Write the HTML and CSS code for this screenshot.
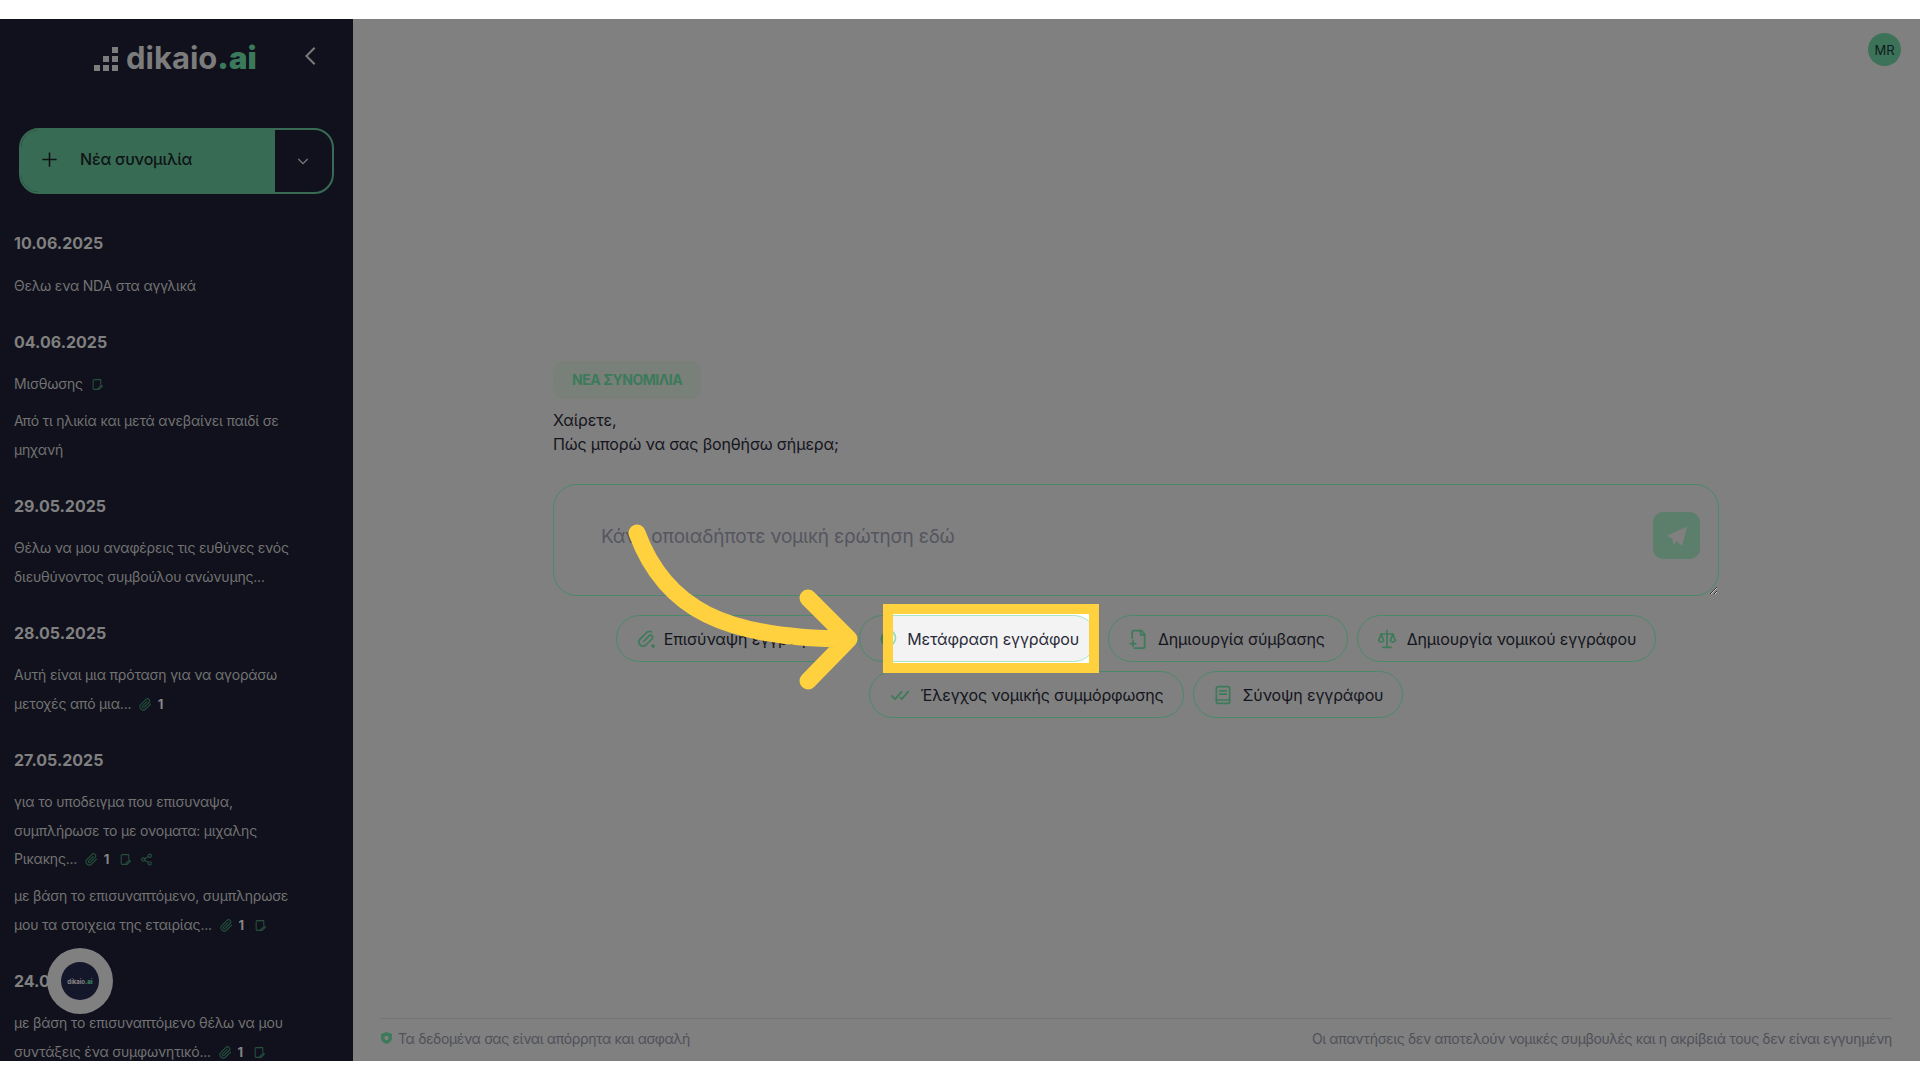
FILE: index.html
```html
<!DOCTYPE html>
<html lang="en">
<head>
    <meta charset="UTF-8">
    <meta name="viewport" content="width=device-width, initial-scale=1.0">
    <title>dikaio.ai</title>
    <link rel="stylesheet" href="styles.css">
</head>
<body>
    <svg class="defs" width="0" height="0">
        <symbol id="i-clip" viewBox="0 0 24 24"><path d="M21.4 11.1l-9.2 9.2a6 6 0 0 1-8.5-8.5l9.2-9.2a4 4 0 0 1 5.7 5.7l-9.2 9.2a2 2 0 0 1-2.8-2.8l8.5-8.5"/></symbol>
        <symbol id="i-edit" viewBox="0 0 24 24"><path d="M12 21H6a2 2 0 0 1-2-2V5a2 2 0 0 1 2-2h12v8"/><path d="M19 13l2 2-6 6h-2v-2z"/></symbol>
        <symbol id="i-share" viewBox="0 0 24 24"><circle cx="18" cy="5" r="3"/><circle cx="6" cy="12" r="3"/><circle cx="18" cy="19" r="3"/><path d="M8.6 13.5l6.8 4M15.4 6.5l-6.8 4"/></symbol>
    </svg>

    <div class="app">
        <aside class="sidebar">
            <div class="brand">
                <div class="logo">
                    <div class="logo-mark">
                        <i></i><i></i><i></i><i></i><i></i><i></i><i></i><i></i><i></i>
                    </div>
                    <span>dikaio<b>.ai</b></span>
                </div>
                <svg class="collapse" viewBox="0 0 24 24"><path d="M16 3L7 12l9 9"/></svg>
            </div>

            <div class="new-chat">
                <div class="new-chat-main">
                    <svg viewBox="0 0 24 24"><path d="M12 3v18M3 12h18"/></svg>
                    <span>Νέα συνομιλία</span>
                </div>
                <div class="new-chat-more">
                    <svg viewBox="0 0 24 24"><path d="M5 9l7 7 7-7"/></svg>
                </div>
            </div>

            <div class="group">
                <div class="date">10.06.2025</div>
                <div class="item">Θελω ενα NDA στα αγγλικά</div>
            </div>
            <div class="group">
                <div class="date">04.06.2025</div>
                <div class="item">Μισθωσης <svg class="mini"><use href="#i-edit"/></svg></div>
                <div class="item">Από τι ηλικία και μετά ανεβαίνει παιδί σε μηχανή</div>
            </div>
            <div class="group">
                <div class="date">29.05.2025</div>
                <div class="item">Θέλω να μου αναφέρεις τις ευθύνες ενός διευθύνοντος συμβούλου ανώνυμης...</div>
            </div>
            <div class="group">
                <div class="date">28.05.2025</div>
                <div class="item">Αυτή είναι μια πρόταση για να αγοράσω μετοχές από μια... <svg class="mini"><use href="#i-clip"/></svg> <b>1</b></div>
            </div>
            <div class="group">
                <div class="date">27.05.2025</div>
                <div class="item">για το υποδειγμα που επισυναψα,<br>συμπλήρωσε το με ονοματα: μιχαλης Ρικακης... <svg class="mini"><use href="#i-clip"/></svg> <b>1</b> <svg class="mini"><use href="#i-edit"/></svg> <svg class="mini"><use href="#i-share"/></svg></div>
                <div class="item">με βάση το επισυναπτόμενο, συμπληρωσε μου τα στοιχεια της εταιρίας... <svg class="mini"><use href="#i-clip"/></svg> <b>1</b> <svg class="mini"><use href="#i-edit"/></svg></div>
            </div>
            <div class="group">
                <div class="date">24.05.2025</div>
                <div class="item">με βάση το επισυναπτόμενο θέλω να μου συντάξεις ένα συμφωνητικό... <svg class="mini"><use href="#i-clip"/></svg> <b>1</b> <svg class="mini"><use href="#i-edit"/></svg></div>
            </div>

            <div class="widget">
                <div class="widget-inner">
                    <span class="widget-name">dikaio<b>.ai</b></span>
                </div>
            </div>
        </aside>

        <main class="main">
            <div class="topbar">
                <div class="avatar">MR</div>
            </div>

            <div class="center">
                <div class="tag">ΝΕΑ ΣΥΝΟΜΙΛΙΑ</div>
                <p class="greeting">Χαίρετε,<br>Πώς μπορώ να σας βοηθήσω σήμερα;</p>

                <div class="ask">
                    <textarea class="ask-input" placeholder="Κάνε οποιαδήποτε νομική ερώτηση εδώ"></textarea>
                    <div class="send">
                        <svg viewBox="0 0 24 24"><path d="M23 1.5L17.5 23l-6-5.5-3.2 4.7-1.6-7.5L1 11.8z"/></svg>
                    </div>
                </div>

                <div class="chips">
                    <div class="chip chip-attach">
                        <svg viewBox="0 0 24 24"><path d="M9 15l7-7a2.500 2.500 0 0 1 3.500 3.500l-8 8a5 5 0 0 1-7-7l8-8a5 5 0 0 1 6-1"/><circle class="dot" cx="20.500" cy="20.500" r="1.200"/></svg>
                        <span>Επισύναψη εγγράφου</span>
                    </div>
                    <div class="chip chip-active">
                        <svg viewBox="0 0 24 24"><circle cx="12" cy="12" r="9"/><path d="M3 12h18"/></svg>
                        <div class="spot">
                            <div class="spot-fill"></div>
                            <svg class="spot-icon" viewBox="0 0 12 24"><path d="M0 3a9 9 0 0 1 0 18"/></svg>
                        </div>
                        <span class="chip-label">Μετάφραση εγγράφου</span>
                    </div>
                    <div class="chip chip-contract">
                        <svg viewBox="0 0 24 24"><path d="M5 11V4a2 2 0 0 1 2-2h9l4 4v15a2 2 0 0 1-2 2H8"/><path d="M15 2v5h5"/><path d="M6 14v7M2.500 17.500h7"/></svg>
                        <span>Δημιουργία σύμβασης</span>
                    </div>
                    <div class="chip">
                        <svg viewBox="0 0 24 24"><path d="M12 2v19M7 22h10M5 6h14"/><path d="M5 6l-3 8a3.500 3.500 0 0 0 6 0zM19 6l-3 8a3.500 3.500 0 0 0 6 0z"/></svg>
                        <span>Δημιουργία νομικού εγγράφου</span>
                    </div>
                    <div class="chip chip-check">
                        <svg viewBox="0 0 24 24"><path d="M2 13l4 4 8-9M12 15l2 2 8-9"/></svg>
                        <span>Έλεγχος νομικής συμμόρφωσης</span>
                    </div>
                    <div class="chip">
                        <svg viewBox="0 0 24 24"><rect x="4" y="2" width="16" height="20" rx="2"/><path d="M8 7h8M8 11h8M4 18h16"/></svg>
                        <span>Σύνοψη εγγράφου</span>
                    </div>
                </div>
            </div>

            <footer class="footer">
                <div class="footer-left">
                    <svg viewBox="0 0 24 24"><path class="shield" d="M12 1l10 3.500v7c0 6-4.500 9.500-10 11.500C6.500 21 2 17.500 2 11.500v-7z"/><circle class="shield-dot" cx="12" cy="12" r="4"/></svg>
                    <span>Τα δεδομένα σας είναι απόρρητα και ασφαλή</span>
                </div>
                <span>Οι απαντήσεις δεν αποτελούν νομικές συμβουλές και η ακρίβειά τους δεν είναι εγγυημένη</span>
            </footer>
        </main>

        <svg class="arrow" viewBox="0 0 1920 1043">
            <path d="M637 514C665 590 725 620 849 620M808 579L849 620L808 662"/>
        </svg>
    </div>
</body>
</html>
```

FILE: styles.css
```css
* {
    box-sizing: border-box;
}
body {
    margin: 0;
    padding-top: 19px;
    background-color: white;
    font-family: "Inter", "Noto Sans", sans-serif;
}
.defs {
    position: absolute;
}
symbol path, symbol circle {
    fill: none;
    stroke: currentColor;
    stroke-width: 2;
    stroke-linecap: round;
    stroke-linejoin: round;
}
.app {
    display: flex;
    height: 1042px;
    position: relative;
    overflow: hidden;
    background-color: #808080;
}

/* sidebar */
.sidebar {
    width: 353px;
    flex-shrink: 0;
    padding: 0 14px;
    background-color: #10111c;
    color: #737373;
    position: relative;
    overflow: hidden;
}
.brand {
    display: flex;
    align-items: center;
    height: 76px;
    padding-left: 80px;
}
.logo {
    display: flex;
    align-items: center;
    gap: 8px;
    font-size: 31px;
    font-weight: 700;
    color: #7c7c7c;
}
.logo b {
    color: #3a7a5a;
}
.logo-mark {
    display: grid;
    grid-template-columns: repeat(3, 6px);
    grid-template-rows: repeat(3, 6px);
    gap: 3px;
    align-self: center;
    margin-top: 4px;
}
.logo-mark i {
    background-color: #7c7c7c;
}
.logo-mark i:nth-child(1), .logo-mark i:nth-child(2), .logo-mark i:nth-child(4) {
    visibility: hidden;
}
.collapse {
    width: 22px;
    height: 22px;
    margin-left: 43px;
    margin-top: -3px;
}
.collapse path {
    fill: none;
    stroke: #7a7a7a;
    stroke-width: 2.200;
}
.new-chat {
    display: flex;
    width: 315px;
    height: 66px;
    margin: 33px 0 37px 5px;
    border: 2px solid #386b54;
    border-radius: 20px;
    overflow: hidden;
}
.new-chat-main {
    width: 254px;
    display: flex;
    align-items: center;
    gap: 21px;
    padding: 0 0 4px 19px;
    background-color: #386b54;
    color: #0e1316;
    font-size: 16px;
    font-weight: 500;
    letter-spacing: -0.2px;
}
.new-chat-main svg {
    width: 19px;
    height: 19px;
}
.new-chat-main path {
    fill: none;
    stroke: #0e1316;
    stroke-width: 2;
}
.new-chat-more {
    flex: 1;
    display: flex;
    align-items: center;
    justify-content: center;
    padding-right: 2px;
}
.new-chat-more svg {
    width: 16px;
    height: 16px;
}
.new-chat-more path {
    fill: none;
    stroke: #7a7a7a;
    stroke-width: 2;
}
.group {
    margin-bottom: 29.5px;
}
.date {
    font-size: 16px;
    line-height: 24px;
    font-weight: 700;
    color: #808080;
    margin-bottom: 16.5px;
}
.item {
    font-size: 14px;
    line-height: 28.5px;
    letter-spacing: -0.2px;
    margin-bottom: 8.5px;
    width: 290px;
}
.item:last-child {
    margin-bottom: 0;
}
.item b {
    font-size: 13px;
    color: #858585;
    margin: 0 2px;
}
.mini {
    width: 13px;
    height: 13px;
    margin-left: 4px;
    vertical-align: -2px;
    color: #25503c;
}
.widget {
    position: absolute;
    left: 47px;
    top: 929px;
    width: 66px;
    height: 66px;
    border-radius: 50%;
    background-color: #808080;
    display: flex;
    align-items: center;
    justify-content: center;
}
.widget-inner {
    width: 38px;
    height: 38px;
    border-radius: 50%;
    background-color: #14162a;
    display: flex;
    align-items: center;
    justify-content: center;
}
.widget-name {
    font-size: 6px;
    font-weight: 700;
    color: #8a8a8a;
}
.widget-name b {
    color: #3a7a5a;
}

/* main */
.main {
    flex: 1;
    display: flex;
    flex-direction: column;
    padding: 0 28px 0 27px;
}
.topbar {
    display: flex;
    justify-content: flex-end;
    height: 342px;
    padding-top: 14px;
    margin-right: -9px;
}
.avatar {
    width: 33px;
    height: 33px;
    border-radius: 50%;
    background-color: #3c7358;
    color: #0f1a20;
    font-size: 13px;
    display: flex;
    align-items: center;
    justify-content: center;
}
.center {
    width: 1166px;
    align-self: center;
}
.tag {
    display: inline-block;
    height: 38px;
    line-height: 38px;
    padding: 0 19px;
    border-radius: 10px;
    background-color: #798079;
    color: #3c7a5a;
    font-size: 14px;
    font-weight: 700;
    letter-spacing: -0.45px;
}
.greeting {
    margin: 9px 0 28px;
    font-size: 16px;
    line-height: 24px;
    letter-spacing: -0.15px;
    color: #14151d;
}
.ask {
    position: relative;
    height: 112px;
}
.ask-input {
    display: block;
    width: 1166px;
    height: 112px;
    padding: 40px 47px;
    border: 1px solid #4a8a68;
    border-radius: 24px;
    background-color: transparent;
    font-family: inherit;
    font-size: 19px;
    letter-spacing: -0.2px;
    line-height: 24px;
    outline: none;
    resize: both;
}
.ask-input::placeholder {
    color: #55565f;
}
.send {
    position: absolute;
    right: 19px;
    top: 28px;
    width: 47px;
    height: 47px;
    border-radius: 10px;
    background-color: #5c7f6c;
    display: flex;
    align-items: center;
    justify-content: center;
}
.send svg {
    width: 22px;
    height: 22px;
}
.send path {
    fill: #808080;
}
.chips {
    display: flex;
    flex-wrap: wrap;
    justify-content: center;
    gap: 9px;
    margin-top: 19px;
}
.chip {
    display: flex;
    align-items: center;
    gap: 10px;
    height: 47px;
    padding: 0 19px;
    border: 1px solid #4a8a68;
    border-radius: 24px;
    color: #14151d;
    font-size: 16px;
    letter-spacing: -0.15px;
}
.chip svg {
    width: 20px;
    height: 20px;
    flex-shrink: 0;
    fill: none;
    stroke: #3c7a5a;
    color: #3c7a5a;
    stroke-width: 2;
    stroke-linecap: round;
    stroke-linejoin: round;
}
.chip .dot {
    fill: #3c7a5a;
}
.chip-attach {
    gap: 8px;
    padding-right: 21px;
}
.chip-contract {
    padding-right: 22px;
}
.chip.chip-check svg {
    width: 22px;
}
.chip-active {
    position: relative;
    gap: 8px;
}
.chip-label {
    position: relative;
    z-index: 2;
    color: #2a2b3a;
}
.spot {
    position: absolute;
    left: 23px;
    top: -12px;
    width: 216px;
    height: 69px;
    border: 10px solid #ffd13f;
    background-color: white;
    overflow: hidden;
    z-index: 1;
}
.spot-fill {
    position: absolute;
    left: -34px;
    top: 1px;
    width: 238px;
    height: 47px;
    border: 1px solid #a5e6c5;
    border-radius: 24px;
    background-color: #f3f3f3;
}
.chip .spot-icon {
    position: absolute;
    left: -5px;
    top: 14px;
    width: 10px;
    height: 20px;
    stroke: #8fdcb8;
}

/* footer */
.footer {
    display: flex;
    justify-content: space-between;
    align-items: center;
    margin-top: auto;
    height: 43px;
    padding-bottom: 4px;
    border-top: 1px solid #757575;
    font-size: 14px;
    letter-spacing: -0.35px;
    color: #4f5058;
}
.footer-left {
    display: flex;
    align-items: center;
    gap: 5px;
}
.footer-left svg {
    width: 13px;
    height: 14px;
}
.shield {
    fill: #3c7a5a;
}
.shield-dot {
    fill: #808080;
}

/* annotation */
.arrow {
    position: absolute;
    left: 0;
    top: 0;
    width: 1920px;
    height: 1043px;
    z-index: 5;
}
.arrow path {
    fill: none;
    stroke: #ffd13f;
    stroke-width: 17;
    stroke-linecap: round;
    stroke-linejoin: round;
}
```
